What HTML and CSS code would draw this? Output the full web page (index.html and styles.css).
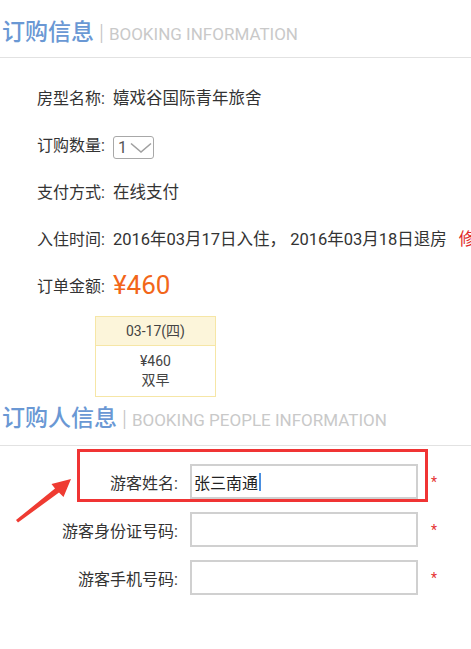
FILE: index.html
```html
<!DOCTYPE html>
<html lang="zh-CN">
<head>
<meta charset="utf-8">
<title>订购信息</title>
<link rel="stylesheet" href="styles.css">
</head>
<body>
<div class="page">
  <div class="sec-head">
    <span class="sec-title">订购信息</span><span class="sec-bar">|</span><span class="sec-sub">BOOKING INFORMATION</span>
  </div>
  <div class="info">
    <div class="row"><span class="lbl">房型名称:</span><span class="val">嬉戏谷国际青年旅舍</span></div>
    <div class="row"><span class="lbl">订购数量:</span>
      <span class="select"><span class="select-num">1</span><svg class="chev" width="22" height="12" viewBox="0 0 22 12"><path d="M1 1.5 L11 10 L21 1.5" fill="none" stroke="#a0a0a0" stroke-width="1.6"/></svg></span>
    </div>
    <div class="row"><span class="lbl">支付方式:</span><span class="val">在线支付</span></div>
    <div class="row"><span class="lbl">入住时间:</span><span class="val">2016年03月17日入住，&nbsp;2016年03月18日退房</span><span class="edit">修改</span></div>
    <div class="row"><span class="lbl">订单金额:</span><span class="val price">¥460</span></div>
  </div>
  <div class="cal">
    <div class="cal-head">03-17(四)</div>
    <div class="cal-body"><div>¥460</div><div>双早</div></div>
  </div>
  <div class="sec-head sec-head2">
    <span class="sec-title">订购人信息</span><span class="sec-bar">|</span><span class="sec-sub">BOOKING PEOPLE INFORMATION</span>
  </div>
  <div class="form">
    <div class="frow"><span class="flbl">游客姓名:</span><div class="field">张三南通<span class="caret"></span></div><span class="req">*</span></div>
    <div class="frow"><span class="flbl">游客身份证号码:</span><div class="field"></div><span class="req">*</span></div>
    <div class="frow"><span class="flbl">游客手机号码:</span><div class="field"></div><span class="req">*</span></div>
  </div>
  <div class="highlight"></div>
  <svg class="arrow" width="471" height="649" viewBox="0 0 471 649">
    <polygon points="16,520 55,488.5 51.5,484 71,479 63.5,497 59,492.5 18,522.5" fill="#ef3b32"/>
  </svg>
</div>
</body>
</html>
```
FILE: styles.css
```css
html, body {
  margin: 0;
  padding: 0;
  background: #fff;
  overflow: hidden;
}
body {
  font-family: Roboto, "Noto Sans CJK SC", sans-serif;
  color: #333;
}
.page {
  position: relative;
  width: 471px;
  height: 649px;
  overflow: hidden;
}
.sec-head {
  display: flex;
  align-items: baseline;
  padding: 18px 0 8px 2px;
  line-height: 30px;
  border-bottom: 1px solid #e2e2e2;
  white-space: nowrap;
}
.sec-head2 {
  padding-top: 7px;
  padding-bottom: 10px;
}
.sec-title {
  font-size: 23px;
  color: #6a98d4;
  font-weight: 500;
}
.sec-bar {
  font-size: 22px;
  color: #c4c4c4;
  margin: 0 5px 0 5px;
  font-weight: 300;
}
.sec-sub {
  font-size: 17px;
  color: #c9c9c9;
}
.info {
  padding: 15px 0 0 37px;
}
.row {
  display: flex;
  align-items: center;
  height: 47px;
  font-size: 16px;
  white-space: nowrap;
  color: #333;
}
.val {
  margin-left: 8px;
  font-size: 16.5px;
}
.price {
  font-size: 26px;
  color: #f2661a;
}
.edit {
  margin-left: 12px;
  font-size: 16.5px;
  color: #e02a2a;
}
.select {
  display: inline-flex;
  align-items: center;
  margin-left: 8px;
  margin-top: 8px;
  width: 41px;
  height: 23px;
  border: 1px solid #a8a8a8;
  border-radius: 3px;
  box-sizing: border-box;
  padding-left: 4px;
  font-size: 16px;
  color: #555;
}
.select-num {
  width: 10px;
}
.chev {
  margin-left: 2px;
}
.cal {
  margin: 8px 0 0 95px;
  width: 119px;
  border: 1px solid #f6e6a6;
  font-size: 14px;
  color: #444;
  text-align: center;
}
.cal-head {
  height: 28px;
  line-height: 28px;
  background: #fcf5da;
  border-bottom: 1px solid #f6e6a6;
}
.cal-body {
  padding: 6px 0;
  line-height: 19px;
}
.form {
  display: flex;
  flex-direction: column;
  gap: 13px;
  padding-top: 18px;
}
.frow {
  display: flex;
  align-items: center;
  height: 35px;
}
.flbl {
  width: 178px;
  text-align: right;
  font-size: 16px;
  color: #333;
  white-space: nowrap;
}
.field {
  margin-left: 12px;
  width: 228px;
  height: 35px;
  box-sizing: border-box;
  border: 2px solid #d0d0d0;
  display: flex;
  align-items: center;
  padding-left: 2px;
  font-size: 16px;
  color: #222;
}
.caret {
  display: inline-block;
  width: 2px;
  height: 18px;
  background: #4a8fe0;
  margin-left: 1px;
}
.req {
  margin-left: 13px;
  color: #e53333;
  font-size: 14px;
}
.highlight {
  position: absolute;
  left: 77px;
  top: 449px;
  width: 351px;
  height: 53px;
  box-sizing: border-box;
  border: 3px solid #f03434;
}
.arrow {
  position: absolute;
  left: 0;
  top: 0;
  pointer-events: none;
}
```
